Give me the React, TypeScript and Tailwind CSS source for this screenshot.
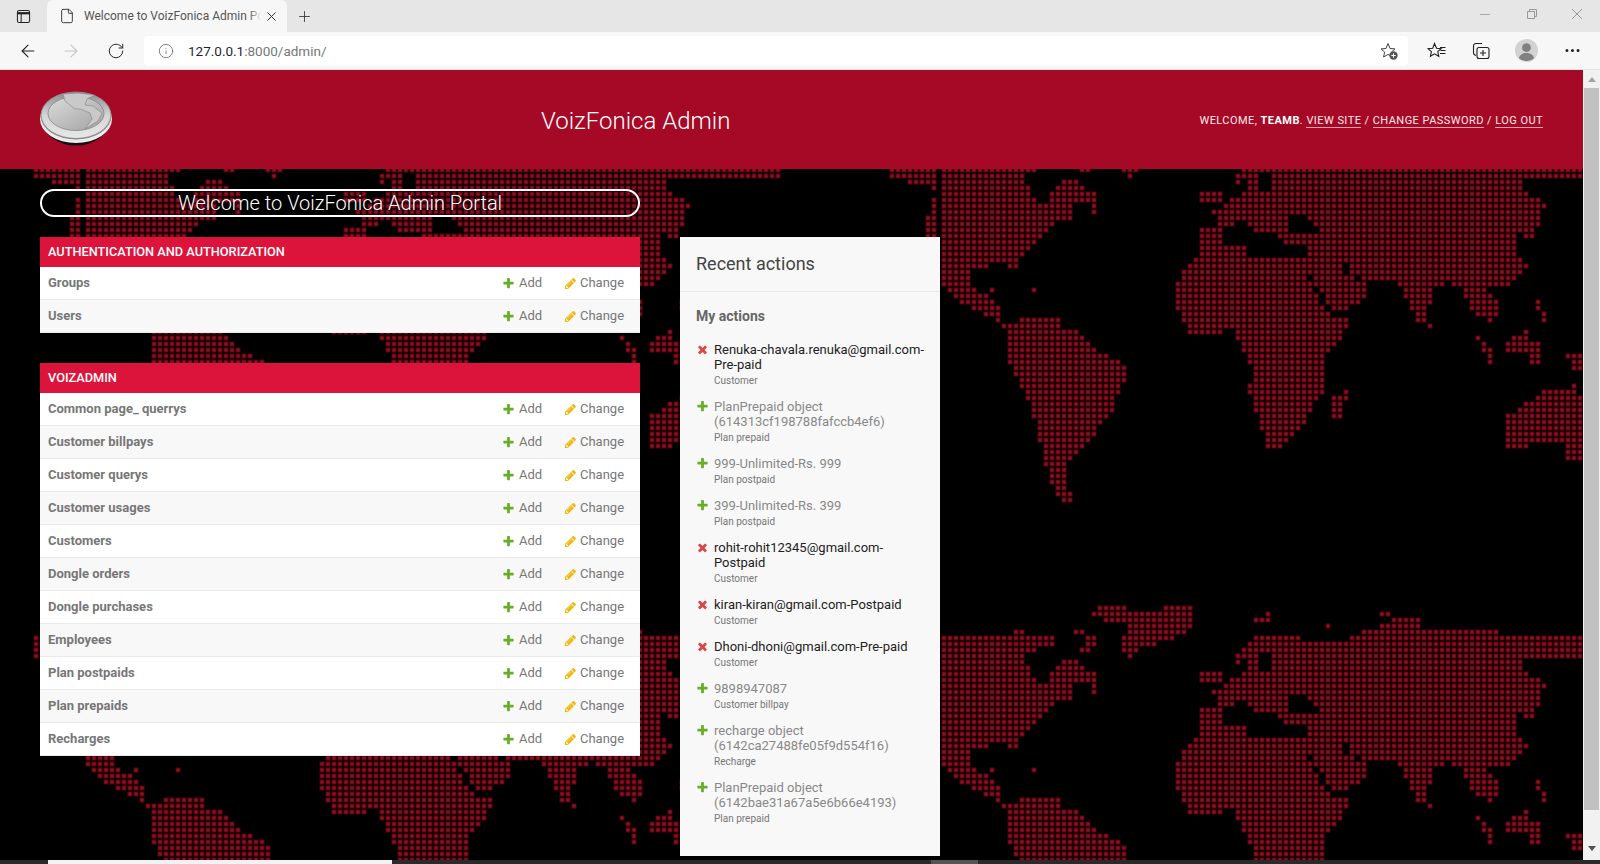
import { ArrowLeft, ArrowRight, File, Info, MoreHorizontal, Plus, RotateCw, X } from "lucide-react";

type Pt = [number, number];

// continents, traced from the dotted map. units: 3 per page px, x0 at page x=940, y0 at page y=110
const land: Pt[][] = [
  // north america
  [[-160,130],[70,130],[90,135],[170,135],[210,130],[215,115],[255,115],[260,130],[340,135],[340,165],[270,190],[255,210],[290,280],[320,285],[330,255],[380,200],[410,205],[445,250],[478,250],[478,282],[400,285],[390,320],[408,332],[340,340],[320,360],[275,410],[240,445],[222,482],[205,468],[170,465],[110,475],[88,500],[90,530],[130,552],[150,530],[170,525],[172,552],[140,560],[190,585],[190,640],[172,635],[120,605],[55,572],[20,552],[0,490],[-50,440],[-50,340],[-5,240],[-160,200]],
  // greenland
  [[480,45],[555,45],[560,65],[665,65],[665,45],[768,45],[768,95],[730,130],[660,160],[610,170],[575,212],[545,190],[545,150],[565,130],[565,95],[490,90],[495,75],[445,78],[445,65],[480,60]],
  [[395,115],[440,115],[440,130],[395,130]],
  [[430,135],[478,135],[478,165],[430,165]],
  [[410,168],[452,168],[440,195],[410,182]],
  [[358,150],[376,150],[376,160],[358,160]],
  [[720,168],[765,168],[765,180],[720,180]],
  [[445,288],[478,288],[478,316],[445,316]],
  [[225,525],[256,525],[256,536],[225,536]],
  [[274,540],[292,540],[292,553],[274,553]],
  // south america
  [[195,645],[240,630],[255,610],[270,625],[295,607],[305,625],[355,630],[375,655],[420,660],[440,690],[480,730],[540,745],[563,770],[563,800],[544,820],[525,900],[475,950],[450,1000],[380,1060],[386,1130],[405,1172],[380,1182],[342,1140],[327,1110],[310,1040],[291,960],[260,860],[228,800],[209,760],[209,700],[190,650]],
  // eurasia and africa
  [[770,380],[785,345],[825,345],[820,305],[850,300],[870,268],[905,265],[910,225],[885,212],[885,185],[925,165],[940,150],[950,133],[1070,133],[1085,165],[1100,150],[1230,150],[1240,130],[1275,125],[1330,100],[1375,85],[1440,85],[1445,115],[1580,115],[1590,125],[1630,125],[1635,115],[1680,115],[1685,130],[2100,130],[2100,210],[1900,210],[1750,212],[1760,245],[1805,270],[1815,290],[1790,360],[1770,395],[1745,370],[1730,380],[1730,435],[1760,465],[1755,490],[1730,510],[1690,530],[1645,535],[1665,565],[1695,610],[1660,615],[1655,640],[1620,620],[1605,620],[1595,595],[1560,530],[1525,520],[1490,530],[1460,620],[1475,655],[1450,640],[1425,630],[1410,580],[1380,530],[1340,505],[1295,505],[1285,530],[1270,570],[1240,590],[1175,603],[1170,620],[1240,622],[1220,660],[1190,700],[1152,745],[1152,850],[1114,900],[1082,960],[1032,1012],[975,1012],[956,920],[924,850],[937,780],[905,710],[873,660],[835,668],[747,668],[720,620],[700,575],[715,510],[735,475],[780,420],[790,400],[770,395]],
  // britain, ireland
  [[785,250],[810,250],[810,278],[785,278]],
  [[818,236],[845,236],[845,282],[818,282]],
  // arctic bits
  [[940,85],[1000,85],[1000,96],[940,96]],
  [[968,65],[1000,65],[1000,76],[968,76]],
  [[1155,98],[1185,98],[1170,126],[1155,126]],
  [[1310,65],[1355,65],[1355,76],[1310,76]],
  [[1632,96],[1645,96],[1645,106],[1632,106]],
  // madagascar
  [[1177,850],[1205,850],[1222,825],[1222,865],[1205,925],[1177,925]],
  // south east asia
  [[1600,675],[1625,675],[1670,750],[1660,762],[1640,750]],
  [[1700,690],[1760,665],[1780,690],[1780,725],[1700,735]],
  [[1775,720],[1800,690],[1800,760],[1775,760]],
  [[1790,565],[1815,600],[1835,640],[1800,650]],
  [[1705,775],[1745,775],[1745,790],[1705,790]],
  [[1880,730],[1940,720],[1940,790],[1900,775]],
  // australia
  [[1703,910],[1780,870],[1830,830],[1880,830],[1900,825],[1945,880],[1945,1050],[1875,1050],[1870,1005],[1703,1010]],
];

const seas: Pt[][] = [
  [[845,375],[870,345],[925,335],[935,370],[1000,375],[1030,395],[1100,405],[1105,445],[1020,450],[990,440],[960,450],[920,430],[915,405],[850,395]],
  [[950,185],[990,185],[990,250],[950,250]],
  [[900,215],[920,215],[920,235],[900,235]],
  [[1055,320],[1075,320],[1095,315],[1140,365],[1055,365]],
  [[1090,475],[1105,475],[1115,500],[1145,555],[1175,590],[1170,605],[1145,585],[1115,530],[1100,490]],
  [[1205,455],[1225,455],[1230,485],[1255,495],[1255,505],[1220,495]],
  [[1075,160],[1090,160],[1090,182],[1075,182]],
];

function inside(x: number, y: number, poly: Pt[]) {
  let hit = false;
  for (let i = 0, j = poly.length - 1; i < poly.length; j = i++) {
    const [xi, yi] = poly[i];
    const [xj, yj] = poly[j];
    if (yi > y !== yj > y && x < ((xj - xi) * (y - yi)) / (yj - yi) + xi) hit = !hit;
  }
  return hit;
}

function buildDots() {
  let soft = "";
  let hard = "";
  for (let r = 0; r < 80; r++) {
    for (let c = 0; c < 142; c++) {
      const px = 4 + c * 6;
      const py = 3 + r * 6;
      const y = (125 + py - 110) * 3;
      const x0 = (84 + px - 940) * 3;
      const on = [x0, x0 + 2568].some(
        (x) => land.some((p) => inside(x, y, p)) && !seas.some((p) => inside(x, y, p))
      );
      if (on) {
        soft += `M${px - 2.5} ${py - 2.5}h5v5h-5z`;
        hard += `M${px - 1.5} ${py - 1.5}h3v3h-3z`;
      }
    }
  }
  return { soft, hard };
}

const dots = buildDots();

function WorldMap() {
  return (
    <svg className="absolute left-0 top-0 h-full w-full" aria-hidden="true">
      <defs>
        <pattern id="world" patternUnits="userSpaceOnUse" x="84" y="55" width="856" height="480">
          <path d={dots.soft} fill="#4e0510" />
          <path d={dots.hard} fill="#980c22" />
        </pattern>
      </defs>
      <rect width="100%" height="100%" fill="url(#world)" />
    </svg>
  );
}

function AddIcon() {
  return (
    <svg viewBox="0 0 1792 1792" className="h-[13px] w-[13px] shrink-0">
      <path
        fill="#66ad28"
        d="M1600 736v192q0 40-28 68t-68 28h-416v416q0 40-28 68t-68 28h-192q-40 0-68-28t-28-68v-416h-416q-40 0-68-28t-28-68v-192q0-40 28-68t68-28h416v-416q0-40 28-68t68-28h192q40 0 68 28t28 68v416h416q40 0 68 28t28 68z"
      />
    </svg>
  );
}

function ChangeIcon() {
  return (
    <svg viewBox="0 0 1792 1792" className="h-[13px] w-[13px] shrink-0">
      <path
        fill="#efb80b"
        d="M491 1536l91-91-235-235-91 91v107h128v128h107zm523-928q0-22-22-22-10 0-17 7l-542 542q-7 7-7 17 0 22 22 22 10 0 17-7l542-542q7-7 7-17zm-54-192l416 416-832 832h-416v-416zm683 96q0 53-37 90l-166 166-416-416 166-165q36-38 90-38 53 0 91 38l235 234q37 39 37 91z"
      />
    </svg>
  );
}

function DeleteIcon() {
  return (
    <svg viewBox="0 0 1792 1792" className="h-[13px] w-[13px] shrink-0">
      <path
        fill="#dd4646"
        d="M1490 1322q0 40-28 68l-136 136q-28 28-68 28t-68-28l-294-294-294 294q-28 28-68 28t-68-28l-136-136q-28-28-28-68t28-68l294-294-294-294q-28-28-28-68t28-68l136-136q28-28 68-28t68 28l294 294 294-294q28-28 68-28t68 28l136 136q28 28 28 68t-28 68l-294 294 294 294q28 28 28 68z"
      />
    </svg>
  );
}

function Coin() {
  return (
    <svg viewBox="0 0 72 56" className="h-[56px] w-[72px]">
      <defs>
        <linearGradient id="coinFace" x1="0" y1="0" x2="1" y2="1">
          <stop offset="0" stopColor="#dcdcdc" />
          <stop offset="1" stopColor="#a2a2a2" />
        </linearGradient>
        <linearGradient id="coinRim" x1="0" y1="0" x2="0" y2="1">
          <stop offset="0" stopColor="#8a8a8a" />
          <stop offset="0.5" stopColor="#d4d4d4" />
          <stop offset="1" stopColor="#e8e8e8" />
        </linearGradient>
      </defs>
      <ellipse cx="36" cy="31" rx="33" ry="24.500" fill="#111" />
      <ellipse cx="36" cy="29" rx="36" ry="24" fill="#ececec" />
      <ellipse cx="36" cy="25.500" rx="35.500" ry="24" fill="#8c8c8c" />
      <ellipse cx="36" cy="25" rx="34.500" ry="23" fill="url(#coinRim)" />
      <ellipse cx="36" cy="23.500" rx="28" ry="17" fill="url(#coinFace)" stroke="#7d7d7d" strokeWidth="0.700" />
      <path
        d="M23 4 L38 3 L55 5 L47 9 L45 15 L53 16 L62 23 L58 31 L45 39 L52 29 L50 23 L40 19 L35 19 L25 11 Z"
        fill="#c9c9c9"
        stroke="#777"
        strokeWidth="0.500"
      />
    </svg>
  );
}

function StarPlusIcon() {
  return (
    <svg viewBox="0 0 20 20" className="h-5 w-5" fill="none" stroke="#444" strokeWidth="1">
      <path d="M9 2.500 11 7.500l5 .4-3.600 3.200 1 4.900L9 13.400 4.600 16l1-4.900L2 7.900l5-.4z" />
      <circle cx="14.500" cy="14.500" r="4.200" fill="#555" stroke="none" />
      <path d="M14.500 12.300v4.400M12.300 14.500h4.400" stroke="#fff" />
    </svg>
  );
}

function StarListIcon() {
  return (
    <svg viewBox="0 0 20 20" className="h-5 w-5" fill="none" stroke="#222" strokeWidth="1.100">
      <path d="M7.500 2.500 9.500 7.300l4.700.4-3.400 2.900 1 4.700-4.300-2.500-4.100 2.500 1-4.700L1 7.700l4.700-.4z" />
      <path d="M13 6.500h5.500M13.500 9.500h5M13 12.500h5.500" />
    </svg>
  );
}

function CollectionsIcon() {
  return (
    <svg viewBox="0 0 20 20" className="h-5 w-5" fill="none" stroke="#222" strokeWidth="1.100">
      <path d="M11 2.500H5a2.500 2.500 0 0 0-2.500 2.500v6.500c0 1.500.8 2.500 2.500 3" />
      <rect x="6" y="6.500" width="12" height="11" rx="2" />
      <path d="M12 9v6M9 12h6" />
    </svg>
  );
}

function Avatar() {
  return (
    <svg viewBox="0 0 24 24" className="h-[23px] w-[23px]">
      <circle cx="12" cy="12" r="12" fill="#d2d2d2" />
      <circle cx="12" cy="9" r="4.600" fill="#808080" />
      <path d="M4 20c1-4 4.500-5.500 8-5.500s7 1.500 8 5.500a12 12 0 0 1-16 0z" fill="#808080" />
    </svg>
  );
}

function TabActionsIcon() {
  return (
    <svg viewBox="0 0 16 16" className="h-[15px] w-[15px]" fill="none" stroke="#222" strokeWidth="1.100">
      <rect x="1.500" y="1.500" width="13" height="13" rx="2" />
      <path d="M5.500 4.500v10" />
      <path d="M1.500 4.500h13" strokeWidth="2.400" />
    </svg>
  );
}

function WindowControls() {
  return (
    <div className="ml-auto flex h-full items-start">
      <svg viewBox="0 0 46 28" className="h-7 w-[46px]">
        <path d="M18 14.500h10" stroke="#aaa" />
      </svg>
      <svg viewBox="0 0 46 28" className="h-7 w-[46px]" fill="none" stroke="#999">
        <path d="M19.500 11.500h7v7h-7zM21.500 11.500v-2h7v7h-2" />
      </svg>
      <svg viewBox="0 0 46 28" className="h-7 w-[46px]" fill="none" stroke="#999">
        <path d="M18 9l10 10M28 9 18 19" />
      </svg>
    </div>
  );
}

function BrowserChrome() {
  return (
    <div className="shrink-0 font-[Roboto,sans-serif]">
      <div className="flex h-8 items-stretch bg-[#e6e6e6]">
        <div className="flex w-[47px] items-center justify-center">
          <TabActionsIcon />
        </div>
        <div className="flex w-[240px] items-center rounded-t-md bg-[#f7f7f7] pl-[12px]">
          <File className="h-[16px] w-[16px] shrink-0 text-[#222]" strokeWidth={1.3} />
          <div className="relative ml-[9px] w-[177px] overflow-hidden whitespace-nowrap text-[12px] text-[#555]">
            Welcome to VoizFonica Admin Portal
            <div className="absolute right-0 top-0 h-full w-[12px] bg-gradient-to-r from-transparent to-[#f7f7f7]" />
          </div>
          <X className="ml-[3px] h-[15px] w-[15px] shrink-0 text-[#333]" strokeWidth={1.6} />
        </div>
        <div className="flex w-[32px] items-center justify-center pl-[3px]">
          <Plus className="h-[17px] w-[17px] text-[#333]" strokeWidth={1.2} />
        </div>
        <WindowControls />
      </div>
      <div className="flex h-[38px] items-center border-b border-[#e4e4e4] bg-[#f7f7f7]">
        <div className="flex w-[144px] items-center pl-[18px]">
          <ArrowLeft className="h-[20px] w-[20px] text-[#222]" strokeWidth={1.3} />
          <ArrowRight className="ml-[23px] h-[20px] w-[20px] text-[#c4c4c4]" strokeWidth={1.3} />
          <RotateCw className="ml-[26px] h-[18px] w-[18px] text-[#222]" strokeWidth={1.3} />
        </div>
        <div className="flex h-[30px] w-[1264px] items-center rounded-[4px] bg-white pl-[14px] pr-[9px]">
          <Info className="h-[16px] w-[16px] text-[#666]" strokeWidth={1.2} />
          <div className="ml-[14px] mt-[1px] text-[13.5px] text-[#777]">
            <span className="text-[#1f1f3a]">127.0.0.1</span>:8000/admin/
          </div>
          <div className="ml-auto">
            <StarPlusIcon />
          </div>
        </div>
        <div className="flex flex-1 items-center pl-[19px]">
          <StarListIcon />
          <div className="ml-[24px]">
            <CollectionsIcon />
          </div>
          <div className="ml-[24px]">
            <Avatar />
          </div>
          <MoreHorizontal className="ml-[25px] h-[19px] w-[19px] text-[#222]" strokeWidth={1.8} />
        </div>
      </div>
    </div>
  );
}

function ModelRow({ name, alt }: { name: string; alt: boolean }) {
  return (
    <div className={`flex h-[33px] items-center border-b border-[#eaeaea] pl-[8px] pr-[16px] ${alt ? "bg-[#f8f8f8]" : "bg-white"}`}>
      <div className="flex-1 text-[13px] font-bold text-[#777]">{name}</div>
      <div className="flex w-[41px] items-center gap-[4px] text-[13px] text-[#777]">
        <AddIcon />
        Add
      </div>
      <div className="ml-[21px] flex w-[60px] items-center gap-[3px] text-[13px] text-[#777]">
        <ChangeIcon />
        Change
      </div>
    </div>
  );
}

function Module({ title, models }: { title: string; models: string[] }) {
  return (
    <div>
      <div className="flex h-[30px] items-center bg-[#dc143c] pl-[8px] text-[12.75px] font-medium uppercase text-white">
        {title}
      </div>
      {models.map((m, i) => (
        <ModelRow key={m} name={m} alt={i % 2 === 1} />
      ))}
    </div>
  );
}

const authModels = ["Groups", "Users"];
const voizModels = [
  "Common page_ querrys",
  "Customer billpays",
  "Customer querys",
  "Customer usages",
  "Customers",
  "Dongle orders",
  "Dongle purchases",
  "Employees",
  "Plan postpaids",
  "Plan prepaids",
  "Recharges",
];

const actions = [
  { kind: "del", lines: ["Renuka-chavala.renuka@gmail.com-", "Pre-paid"], sub: "Customer" },
  { kind: "add", lines: ["PlanPrepaid object", "(614313cf198788fafccb4ef6)"], sub: "Plan prepaid" },
  { kind: "add", lines: ["999-Unlimited-Rs. 999"], sub: "Plan postpaid" },
  { kind: "add", lines: ["399-Unlimited-Rs. 399"], sub: "Plan postpaid" },
  { kind: "del", lines: ["rohit-rohit12345@gmail.com-", "Postpaid"], sub: "Customer" },
  { kind: "del", lines: ["kiran-kiran@gmail.com-Postpaid"], sub: "Customer" },
  { kind: "del", lines: ["Dhoni-dhoni@gmail.com-Pre-paid"], sub: "Customer" },
  { kind: "add", lines: ["9898947087"], sub: "Customer billpay" },
  { kind: "add", lines: ["recharge object", "(6142ca27488fe05f9d554f16)"], sub: "Recharge" },
  { kind: "add", lines: ["PlanPrepaid object", "(6142bae31a67a5e6b66e4193)"], sub: "Plan prepaid" },
];

function RecentActions() {
  return (
    <div className="h-[619px] w-[260px] bg-[#f8f8f8]">
      <div className="flex h-[55px] items-center border-b border-[#eaeaea] pb-[1px] pl-[16px] text-[18px] text-[#444]">
        Recent actions
      </div>
      <div className="px-[16px] pt-[14px]">
        <div className="text-[14px] font-bold leading-[20px] text-[#666]">My actions</div>
        <div className="mt-[16px]">
          {actions.map((a) => (
            <div key={a.lines[0]} className="mb-[11px] flex">
              <div className="w-[18px] shrink-0 pt-[1px]">
                {a.kind === "del" ? <DeleteIcon /> : <AddIcon />}
              </div>
              <div>
                <div className={`text-[13px] leading-[15px] ${a.kind === "del" ? "text-[#222]" : "text-[#888]"}`}>
                  {a.lines.map((l) => (
                    <div key={l} className="whitespace-nowrap">{l}</div>
                  ))}
                </div>
                <div className="mt-[1px] text-[10px] leading-[15px] text-[#777]">{a.sub}</div>
              </div>
            </div>
          ))}
        </div>
      </div>
    </div>
  );
}

function AdminHeader() {
  return (
    <div className="relative flex h-[99px] shrink-0 items-center bg-[#a50926] pl-[40px] pr-[40px] text-white">
      <div className="mt-[-4px]">
        <Coin />
      </div>
      <div className="ml-[429px] mt-[3px] whitespace-nowrap text-[24px] font-light">VoizFonica Admin</div>
      <div className="ml-auto mt-[3px] whitespace-nowrap text-[11px] uppercase tracking-[0.45px] text-[#ffe9e9]">
        Welcome, <span className="font-bold text-white">teamb</span>.{" "}
        <span className="border-b border-[#e8a0ac]">View site</span> /{" "}
        <span className="border-b border-[#e8a0ac]">Change password</span> /{" "}
        <span className="border-b border-[#e8a0ac]">Log out</span>
      </div>
    </div>
  );
}

function VerticalScrollbar() {
  return (
    <div className="flex w-[17px] shrink-0 flex-col items-center bg-[#f1f1f1]">
      <div className="mt-[7px] h-0 w-0 border-x-[4px] border-b-[5px] border-x-transparent border-b-[#a3a3a3]" />
      <div className="mt-[6px] h-[722px] w-[15px] bg-[#c1c1c1]" />
      <div className="mt-[36px] h-0 w-0 border-x-[4px] border-t-[5px] border-x-transparent border-t-[#505050]" />
    </div>
  );
}

export default function App() {
  return (
    <div className="flex h-[864px] w-[1600px] flex-col overflow-hidden bg-black font-[Roboto,sans-serif]">
      <BrowserChrome />
      <div className="flex min-h-0 flex-1">
        <div className="relative flex min-w-0 flex-1 flex-col overflow-hidden bg-black">
          <WorldMap />
          <AdminHeader />
          <div className="relative flex gap-[40px] pl-[40px] pt-[20px]">
            <div className="w-[600px]">
              <div className="flex h-[28px] items-center justify-center rounded-full border-2 border-white text-[20px] font-light text-white">
                Welcome to VoizFonica Admin Portal
              </div>
              <div className="mt-[20px] flex flex-col gap-[30px]">
                <Module title="Authentication and Authorization" models={authModels} />
                <Module title="Voizadmin" models={voizModels} />
              </div>
            </div>
            <div className="pt-[48px]">
              <RecentActions />
            </div>
          </div>
        </div>
        <VerticalScrollbar />
      </div>
      <div className="flex h-[4px] shrink-0 bg-[#2a2a2a]">
        <div className="ml-[48px] w-[344px] bg-[#f2f2f2]" />
        <div className="ml-[539px] w-[47px] bg-[#555]" />
      </div>
    </div>
  );
}
